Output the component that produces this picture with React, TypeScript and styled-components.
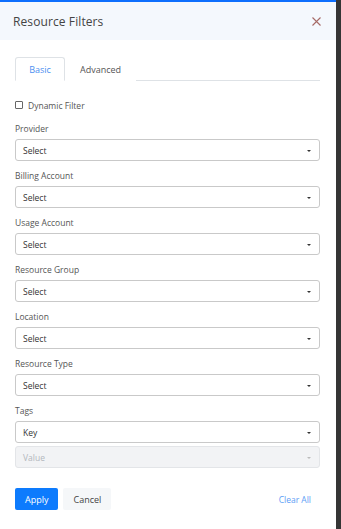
import React from 'react';
import styled, { createGlobalStyle } from 'styled-components';

const GlobalStyle = createGlobalStyle`
  html, body {
    margin: 0;
    padding: 0;
    background: #353535;
  }
  body {
    font-family: 'Open Sans', 'Liberation Sans', sans-serif;
  }
`;

const fields = ['Provider', 'Billing Account', 'Usage Account', 'Resource Group', 'Location', 'Resource Type'];

export default function App() {
  return (
    <>
      <GlobalStyle />
      <Panel>
        <TopBar />
        <Header>
          <Title>Resource Filters</Title>
          <CloseButton aria-label="Close">
            <svg width="9" height="9" viewBox="0 0 9 9">
              <path d="M0.5 0.5 L8.5 8.5 M8.5 0.5 L0.5 8.5" stroke="#a66a66" strokeWidth="1.1" />
            </svg>
          </CloseButton>
        </Header>
        <Body>
          {/* Tabs */}
          <Tabs>
            <Tab active>Basic</Tab>
            <Tab>Advanced</Tab>
          </Tabs>

          <CheckRow>
            <CheckBox />
            <span>Dynamic Filter</span>
          </CheckRow>

          <Fields>
            {fields.map(name => (
              <Field key={name}>
                <Label>{name}</Label>
                <Select>
                  <span>Select</span>
                  <Caret />
                </Select>
              </Field>
            ))}
            <Field>
              <Label>Tags</Label>
              <Select>
                <span>Key</span>
                <Caret />
              </Select>
              <Select disabled>
                <span>Value</span>
                <Caret disabled />
              </Select>
            </Field>
          </Fields>

          <Footer>
            <Buttons>
              <Button primary>Apply</Button>
              <Button>Cancel</Button>
            </Buttons>
            <ClearLink>Clear All</ClearLink>
          </Footer>
        </Body>
      </Panel>
    </>
  );
}

const Panel = styled.div`
  width: 336px;
  min-height: 100vh;
  background: #ffffff;
  display: flex;
  flex-direction: column;
`;

const TopBar = styled.div`
  height: 2px;
  background: #0d6efd;
`;

const Header = styled.div`
  height: 38px;
  background: #f4f8fd;
  display: flex;
  align-items: center;
  justify-content: space-between;
  padding: 0 15px 0 13px;
`;

const Title = styled.div`
  font-size: 12px;
  color: #444;
  letter-spacing: 0.1px;
`;

const CloseButton = styled.div`
  display: flex;
  width: 9px;
  height: 9px;
`;

const Body = styled.div`
  padding: 17px 16px 0 15px;
  display: flex;
  flex-direction: column;
`;

const Tabs = styled.div`
  display: flex;
  border-bottom: 1px solid #dee2e6;
  height: 23px;
`;

const Tab = styled.div<{ active?: boolean }>`
  box-sizing: border-box;
  height: 24px;
  padding: 0 14px;
  display: flex;
  align-items: center;
  font-size: 9px;
  color: ${p => (p.active ? '#4c8ff0' : '#555')};
  background: #fff;
  border: 1px solid ${p => (p.active ? '#dee2e6' : 'transparent')};
  border-bottom-color: ${p => (p.active ? '#fff' : 'transparent')};
  border-radius: 3px 3px 0 0;
  ${p => (p.active ? 'width: 50px; justify-content: center;' : '')}
`;

const CheckRow = styled.label`
  display: flex;
  align-items: center;
  gap: 5px;
  margin-top: 17px;
  height: 14px;
  font-size: 8.5px;
  color: #555;
`;

const CheckBox = styled.span`
  box-sizing: border-box;
  width: 8px;
  height: 8px;
  border: 1px solid #666;
  border-radius: 1px;
`;

const Fields = styled.div`
  display: flex;
  flex-direction: column;
  gap: 8px;
  margin-top: 10px;
`;

const Field = styled.div`
  display: flex;
  flex-direction: column;
  gap: 3px;
  & > :first-child {
    margin-bottom: 1px;
  }
`;

const Label = styled.div`
  font-size: 8.5px;
  line-height: 13px;
  color: #555;
`;

const Select = styled.div<{ disabled?: boolean }>`
  box-sizing: border-box;
  height: 22px;
  border: 1px solid ${p => (p.disabled ? '#e3e5e8' : '#c9c9c9')};
  border-radius: 3px;
  background: ${p => (p.disabled ? '#f2f3f5' : '#fff')};
  display: flex;
  align-items: center;
  justify-content: space-between;
  padding: 0 8px 0 7px;
  font-size: 8.5px;
  color: ${p => (p.disabled ? '#b3b7bd' : '#333')};
`;

const Caret = styled.span<{ disabled?: boolean }>`
  width: 0;
  height: 0;
  border-left: 2.5px solid transparent;
  border-right: 2.5px solid transparent;
  border-top: 2.5px solid ${p => (p.disabled ? '#bbb' : '#333')};
  margin-top: 1px;
`;

const Footer = styled.div`
  display: flex;
  align-items: center;
  justify-content: space-between;
  margin-top: 20px;
  padding-right: 9px;
`;

const Buttons = styled.div`
  display: flex;
  gap: 5px;
`;

const Button = styled.button<{ primary?: boolean }>`
  box-sizing: border-box;
  height: 22px;
  padding: 0 10px;
  border: none;
  border-radius: 2px;
  font-family: inherit;
  font-size: 9px;
  color: ${p => (p.primary ? '#fff' : '#444')};
  background: ${p => (p.primary ? '#0d7bfd' : '#f5f7f9')};
`;

const ClearLink = styled.span`
  font-size: 8.5px;
  color: #5c9ef5;
  margin-top: 1px;
`;
